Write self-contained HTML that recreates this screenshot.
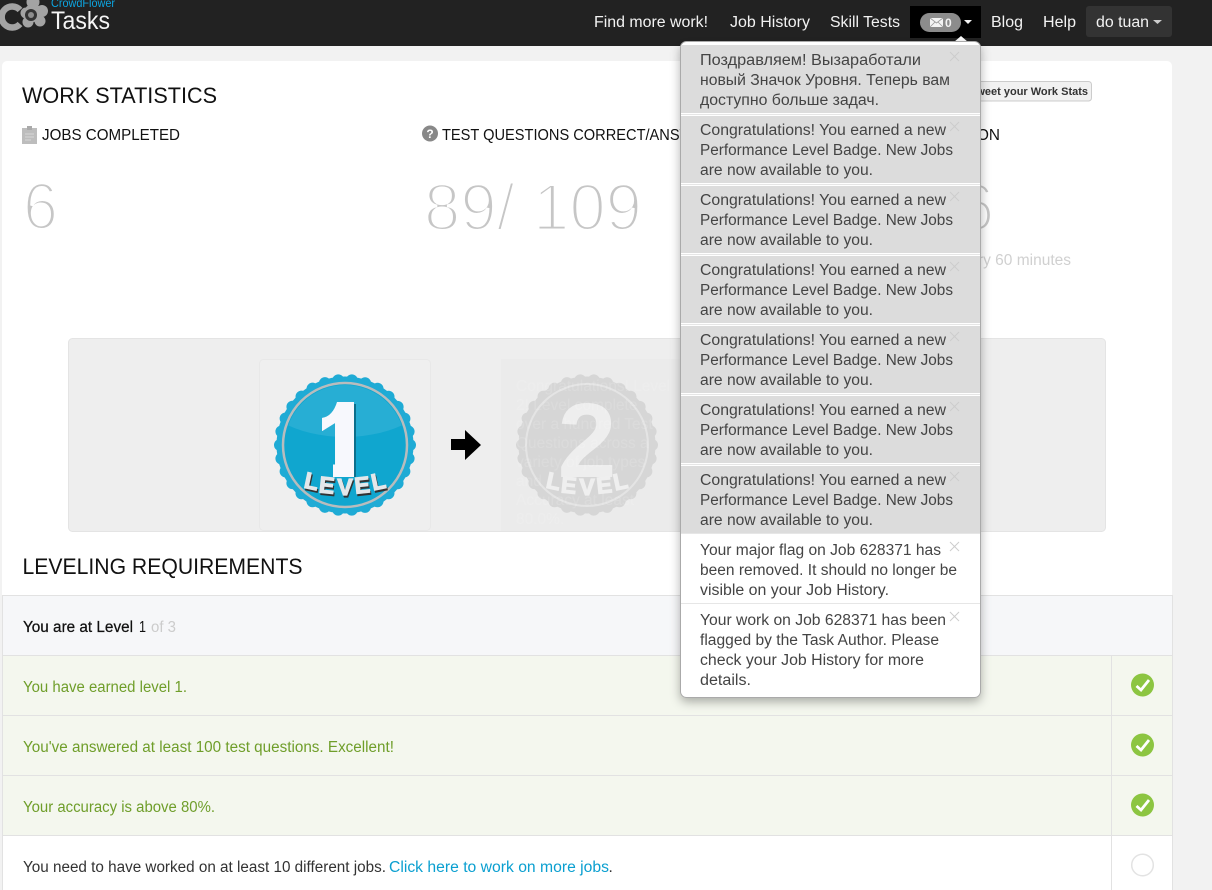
<!DOCTYPE html>
<html lang="en">
<head>
<meta charset="utf-8">
<title>Tasks</title>
<style>
html,body{margin:0;padding:0;width:1212px;height:890px;overflow:hidden;background:#f2f2f2}
svg{display:block}
text{font-family:"Liberation Sans","Noto Sans CJK JP",sans-serif;white-space:pre}
.n{font-size:15.5px;fill:#f2f2f2}
.m{font-size:15.5px;fill:#444}
.h{font-size:22px;fill:#111}
.s{font-size:15.5px;fill:#111}
.g{font-size:15.5px;fill:#6f9e2a}
.big{font-size:66px;fill:#c6c6c6;stroke:#fff;stroke-width:3px}
.x{stroke:#ccc;stroke-width:1;fill:none}
.lv{font-size:23px;font-weight:bold;text-anchor:middle;stroke-width:1.2px}
.f{font-size:15.5px;fill:#fff;opacity:.14}
</style>
</head>
<body>
<svg width="1212" height="890" viewBox="0 0 1212 890" xmlns="http://www.w3.org/2000/svg">
<defs>
<filter id="sh" x="-10%" y="-10%" width="120%" height="120%"><feDropShadow dx="0" dy="4" stdDeviation="5" flood-color="#000" flood-opacity=".3"/></filter>
<clipPath id="c1"><circle cx="345" cy="445" r="60"/></clipPath>
<clipPath id="one"><path d="M337 402H354V477H333V431H322V418Q333 416 337 402Z"/></clipPath>
</defs>

<!-- page -->
<rect width="1212" height="890" fill="#f2f2f2"/>
<rect x="2" y="61" width="1170" height="840" rx="5" fill="#fff"/>

<!-- nav -->
<rect width="1212" height="46" fill="#222"/>
<path d="M20 10A10.500 10.500 0 1 0 20 24" fill="none" stroke="#a3a3a3" stroke-width="6.500"/>
<g fill="#a3a3a3">
  <circle cx="33" cy="2" r="6.500"/><circle cx="26" cy="13" r="5.500"/><circle cx="42" cy="11" r="6"/><circle cx="28" cy="22" r="5.500"/><circle cx="40" cy="21" r="5.500"/>
  <circle cx="33" cy="13" r="9"/>
</g>
<circle cx="31" cy="15" r="6" fill="#333"/>
<circle cx="31" cy="15" r="3" fill="#8d8d8d"/>
<text x="51" y="7" font-size="12" fill="#0da5e0" textLength="64" lengthAdjust="spacingAndGlyphs">CrowdFlower</text>
<text x="51" y="29" font-size="25" fill="#f5f5f5" textLength="59" lengthAdjust="spacingAndGlyphs">Tasks</text>

<text class="n" x="594" y="27" textLength="114" lengthAdjust="spacingAndGlyphs">Find more work!</text>
<text class="n" x="730" y="27" textLength="80" lengthAdjust="spacingAndGlyphs">Job History</text>
<text class="n" x="830" y="27" textLength="70" lengthAdjust="spacingAndGlyphs">Skill Tests</text>
<rect x="910" y="6" width="71" height="32" fill="#000"/>
<rect x="920" y="13" width="41" height="19" rx="9.500" fill="#8c8c8c"/>
<rect x="930" y="18" width="13" height="9" fill="#f4f4f4"/>
<path d="M930 18L936.500 23L943 18M930 27L935 22M943 27L938 22" fill="none" stroke="#999" stroke-width=".8"/>
<text x="945" y="27" font-size="12" font-weight="bold" fill="#f4f4f4">0</text>
<path d="M964 20H972L968 24Z" fill="#f2f2f2"/>
<text class="n" x="991" y="27" textLength="32" lengthAdjust="spacingAndGlyphs">Blog</text>
<text class="n" x="1043" y="27" textLength="33" lengthAdjust="spacingAndGlyphs">Help</text>
<rect x="1086" y="6" width="86" height="31" rx="3" fill="#333"/>
<text class="n" x="1096" y="27" textLength="53" lengthAdjust="spacingAndGlyphs">do tuan</text>
<path d="M1153 20H1162L1157.500 24Z" fill="#ccc"/>

<!-- stats -->
<text class="h" x="22" y="103" textLength="195" lengthAdjust="spacingAndGlyphs">WORK STATISTICS</text>
<rect x="22" y="128" width="15" height="16" fill="#bdbdbd"/>
<rect x="27" y="126" width="5" height="4" fill="#aaa"/>
<path d="M25 134H34M25 137H34M25 140H31" stroke="#d8d8d8" stroke-width="1"/>
<text class="s" x="42" y="140" textLength="138" lengthAdjust="spacingAndGlyphs">JOBS COMPLETED</text>
<circle cx="430" cy="133.500" r="8" fill="#888"/>
<text x="430" y="138" font-size="12" font-weight="bold" fill="#fff" text-anchor="middle">?</text>
<text class="s" x="442" y="140" textLength="292" lengthAdjust="spacingAndGlyphs">TEST QUESTIONS CORRECT/ANSWERED</text>
<text class="s" x="977" y="140" textLength="23" lengthAdjust="spacingAndGlyphs">ON</text>
<text class="big" x="23" y="229" textLength="35" lengthAdjust="spacingAndGlyphs">6</text>
<text class="big" x="424" y="230" textLength="218" lengthAdjust="spacingAndGlyphs">89/ 109</text>
<text class="big" x="960" y="230" textLength="34" lengthAdjust="spacingAndGlyphs">6</text>
<text x="1071" y="265" font-size="15.5" fill="#d0d0d0" text-anchor="end">every 60 minutes</text>

<!-- tweet button -->
<rect x="960.500" y="81.500" width="131" height="19.500" rx="3" fill="#f1f1f1" stroke="#ccc"/>
<text x="1088" y="95" font-size="11" font-weight="bold" fill="#333" text-anchor="end">Tweet your Work Stats</text>

<!-- level panel -->
<rect x="68.500" y="338.500" width="1037" height="193" rx="4" fill="#eee" stroke="#e4e4e4"/>
<rect x="259.500" y="359.500" width="171" height="171" rx="4" fill="#efefef" stroke="#e8e8e8"/>
<rect x="501" y="359" width="190" height="172" fill="#ebebeb"/>

<!-- badge 1 -->
<circle cx="345" cy="445" r="68.500" fill="#1fabd5"/>
<circle cx="345" cy="445" r="65" fill="none" stroke="#1fabd5" stroke-width="12" stroke-linecap="round" stroke-dasharray="0 13.61"/>
<circle cx="345" cy="445" r="62" fill="#10a6cf" stroke="#b9bcbd" stroke-width="2.500"/>
<g clip-path="url(#c1)"><ellipse cx="345" cy="385" rx="90" ry="52" fill="#27aed4"/></g>
<g clip-path="url(#one)"><text x="344" y="480" font-size="112" font-weight="bold" fill="#f7f8fd" stroke="#f7f8fd" stroke-width="8" text-anchor="middle">1</text></g>
<rect x="354" y="404" width="2" height="73" fill="#0b6f8c"/>
<g fill="#333" stroke="#333">
<text class="lv" transform="translate(311,491) rotate(12)">L</text>
<text class="lv" transform="translate(327,495) rotate(6)">E</text>
<text class="lv" transform="translate(346,497)">V</text>
<text class="lv" transform="translate(364,495) rotate(-6)">E</text>
<text class="lv" transform="translate(381,491) rotate(-12)">L</text>
</g>
<g fill="#e3e7ea" stroke="#e3e7ea">
<text class="lv" transform="translate(310,489) rotate(12)">L</text>
<text class="lv" transform="translate(326,493) rotate(6)">E</text>
<text class="lv" transform="translate(345,495)">V</text>
<text class="lv" transform="translate(363,493) rotate(-6)">E</text>
<text class="lv" transform="translate(380,489) rotate(-12)">L</text>
</g>

<!-- arrow -->
<path d="M451 439H465V430L481 445L465 460V450H451Z" fill="#000"/>

<!-- badge 2 -->
<circle cx="587" cy="445" r="68.500" fill="#d6d6d6"/>
<circle cx="587" cy="445" r="65" fill="none" stroke="#d6d6d6" stroke-width="12" stroke-linecap="round" stroke-dasharray="0 13.61"/>
<circle cx="587" cy="445" r="61" fill="#d6d6d6" stroke="#e4e4e4" stroke-width="2"/>
<text x="587" y="477" font-size="106" font-weight="bold" fill="#eeeeee" text-anchor="middle">2</text>
<g fill="#efefef" stroke="#efefef">
<text class="lv" transform="translate(552,489) rotate(12)">L</text>
<text class="lv" transform="translate(568,493) rotate(6)">E</text>
<text class="lv" transform="translate(587,495)">V</text>
<text class="lv" transform="translate(605,493) rotate(-6)">E</text>
<text class="lv" transform="translate(622,489) rotate(-12)">L</text>
</g>
<text class="f" x="516" y="391">Congratulations! Level</text>
<text class="f" x="516" y="410">2! Level complete</text>
<text class="f" x="516" y="429">over a hundred Test</text>
<text class="f" x="516" y="448">Questions across a</text>
<text class="f" x="516" y="467">variety of job types</text>
<text class="f" x="516" y="486">and</text>
<text class="f" x="516" y="505">Accuracy at least</text>
<text class="f" x="516" y="524">80.0%.</text>

<!-- requirements -->
<text class="h" x="22.500" y="574" textLength="280" lengthAdjust="spacingAndGlyphs">LEVELING REQUIREMENTS</text>
<rect x="2" y="595" width="1171" height="61" fill="#f6f7f9"/>
<rect x="2" y="656" width="1171" height="180" fill="#f4f7ee"/>
<g stroke="#e2e2e2" stroke-width="1" fill="none">
<path d="M2 595.500H1173M2 655.500H1173M2 715.500H1173M2 775.500H1173M2 835.500H1173"/>
<path d="M2.500 595V890M1172.500 595V890M1111.500 655V890"/>
</g>
<text class="s" x="23" y="632" textLength="110" lengthAdjust="spacingAndGlyphs" stroke="#111" stroke-width=".25">You are at Level</text>
<text class="s" x="139" y="632" textLength="7" lengthAdjust="spacingAndGlyphs">1</text>
<text x="151" y="632" font-size="15.5" fill="#ccc" textLength="25" lengthAdjust="spacingAndGlyphs">of 3</text>
<text class="g" x="23" y="692" textLength="164" lengthAdjust="spacingAndGlyphs">You have earned level 1.</text>
<text class="g" x="23" y="752" textLength="371" lengthAdjust="spacingAndGlyphs">You've answered at least 100 test questions. Excellent!</text>
<text class="g" x="23" y="812" textLength="192" lengthAdjust="spacingAndGlyphs">Your accuracy is above 80%.</text>
<text x="23" y="872" font-size="15.5" fill="#333" textLength="363" lengthAdjust="spacingAndGlyphs">You need to have worked on at least 10 different jobs.</text>
<text x="389" y="872" font-size="15.5" fill="#0a9fd0" textLength="220" lengthAdjust="spacingAndGlyphs">Click here to work on more jobs</text>
<text x="608.500" y="872" font-size="15.5" fill="#333">.</text>

<circle cx="1142.500" cy="685" r="11.500" fill="#8cc541"/>
<path d="M1136.500 686L1141 690L1149 680" fill="none" stroke="#fff" stroke-width="2.800"/>
<circle cx="1142.500" cy="745" r="11.500" fill="#8cc541"/>
<path d="M1136.500 746L1141 750L1149 740" fill="none" stroke="#fff" stroke-width="2.800"/>
<circle cx="1142.500" cy="805" r="11.500" fill="#8cc541"/>
<path d="M1136.500 806L1141 810L1149 800" fill="none" stroke="#fff" stroke-width="2.800"/>
<circle cx="1142.500" cy="865" r="10.800" fill="#fff" stroke="#e3e3e3" stroke-width="1.500"/>

<!-- dropdown -->
<path d="M954 42L961 36L968 42Z" fill="#fff"/>
<rect x="680.500" y="41.500" width="300" height="656" rx="6" fill="#fff" stroke="#aaa" filter="url(#sh)"/>
<g fill="#dcdcdc">
<rect x="681" y="45" width="299" height="68"/>
<rect x="681" y="116" width="299" height="67"/>
<rect x="681" y="186" width="299" height="67"/>
<rect x="681" y="256" width="299" height="67"/>
<rect x="681" y="326" width="299" height="67"/>
<rect x="681" y="396" width="299" height="67"/>
<rect x="681" y="466" width="299" height="67"/>
</g>
<g stroke="#e6e6e6"><path d="M681 114.500H980M681 184.500H980M681 254.500H980M681 324.500H980M681 394.500H980M681 464.500H980M681 533.500H980M681 603.500H980"/></g>

<text class="m" x="700" y="65" textLength="221" lengthAdjust="spacingAndGlyphs">Поздравляем! Вызаработали</text>
<text class="m" x="700" y="85" textLength="250" lengthAdjust="spacingAndGlyphs">новый Значок Уровня. Теперь вам</text>
<text class="m" x="700" y="105" textLength="179" lengthAdjust="spacingAndGlyphs">доступно больше задач.</text>

<text class="m" x="700" y="135" textLength="246" lengthAdjust="spacingAndGlyphs">Congratulations! You earned a new</text>
<text class="m" x="700" y="155" textLength="253" lengthAdjust="spacingAndGlyphs">Performance Level Badge. New Jobs</text>
<text class="m" x="700" y="175" textLength="173" lengthAdjust="spacingAndGlyphs">are now available to you.</text>

<text class="m" x="700" y="205" textLength="246" lengthAdjust="spacingAndGlyphs">Congratulations! You earned a new</text>
<text class="m" x="700" y="225" textLength="253" lengthAdjust="spacingAndGlyphs">Performance Level Badge. New Jobs</text>
<text class="m" x="700" y="245" textLength="173" lengthAdjust="spacingAndGlyphs">are now available to you.</text>

<text class="m" x="700" y="275" textLength="246" lengthAdjust="spacingAndGlyphs">Congratulations! You earned a new</text>
<text class="m" x="700" y="295" textLength="253" lengthAdjust="spacingAndGlyphs">Performance Level Badge. New Jobs</text>
<text class="m" x="700" y="315" textLength="173" lengthAdjust="spacingAndGlyphs">are now available to you.</text>

<text class="m" x="700" y="345" textLength="246" lengthAdjust="spacingAndGlyphs">Congratulations! You earned a new</text>
<text class="m" x="700" y="365" textLength="253" lengthAdjust="spacingAndGlyphs">Performance Level Badge. New Jobs</text>
<text class="m" x="700" y="385" textLength="173" lengthAdjust="spacingAndGlyphs">are now available to you.</text>

<text class="m" x="700" y="415" textLength="246" lengthAdjust="spacingAndGlyphs">Congratulations! You earned a new</text>
<text class="m" x="700" y="435" textLength="253" lengthAdjust="spacingAndGlyphs">Performance Level Badge. New Jobs</text>
<text class="m" x="700" y="455" textLength="173" lengthAdjust="spacingAndGlyphs">are now available to you.</text>

<text class="m" x="700" y="485" textLength="246" lengthAdjust="spacingAndGlyphs">Congratulations! You earned a new</text>
<text class="m" x="700" y="505" textLength="253" lengthAdjust="spacingAndGlyphs">Performance Level Badge. New Jobs</text>
<text class="m" x="700" y="525" textLength="173" lengthAdjust="spacingAndGlyphs">are now available to you.</text>

<text class="m" x="700" y="555" textLength="241" lengthAdjust="spacingAndGlyphs">Your major flag on Job 628371 has</text>
<text class="m" x="700" y="575" textLength="257" lengthAdjust="spacingAndGlyphs">been removed. It should no longer be</text>
<text class="m" x="700" y="595" textLength="189" lengthAdjust="spacingAndGlyphs">visible on your Job History.</text>

<text class="m" x="700" y="625" textLength="246" lengthAdjust="spacingAndGlyphs">Your work on Job 628371 has been</text>
<text class="m" x="700" y="645" textLength="239" lengthAdjust="spacingAndGlyphs">flagged by the Task Author. Please</text>
<text class="m" x="700" y="665" textLength="224" lengthAdjust="spacingAndGlyphs">check your Job History for more</text>
<text class="m" x="700" y="685" textLength="51" lengthAdjust="spacingAndGlyphs">details.</text>

<path class="x" d="M950 52L959 61M959 52L950 61"/>
<path class="x" d="M950 122L959 131M959 122L950 131"/>
<path class="x" d="M950 192L959 201M959 192L950 201"/>
<path class="x" d="M950 262L959 271M959 262L950 271"/>
<path class="x" d="M950 332L959 341M959 332L950 341"/>
<path class="x" d="M950 402L959 411M959 402L950 411"/>
<path class="x" d="M950 472L959 481M959 472L950 481"/>
<path class="x" d="M950 542L959 551M959 542L950 551"/>
<path class="x" d="M950 612L959 621M959 612L950 621"/>
</svg>
</body>
</html>
